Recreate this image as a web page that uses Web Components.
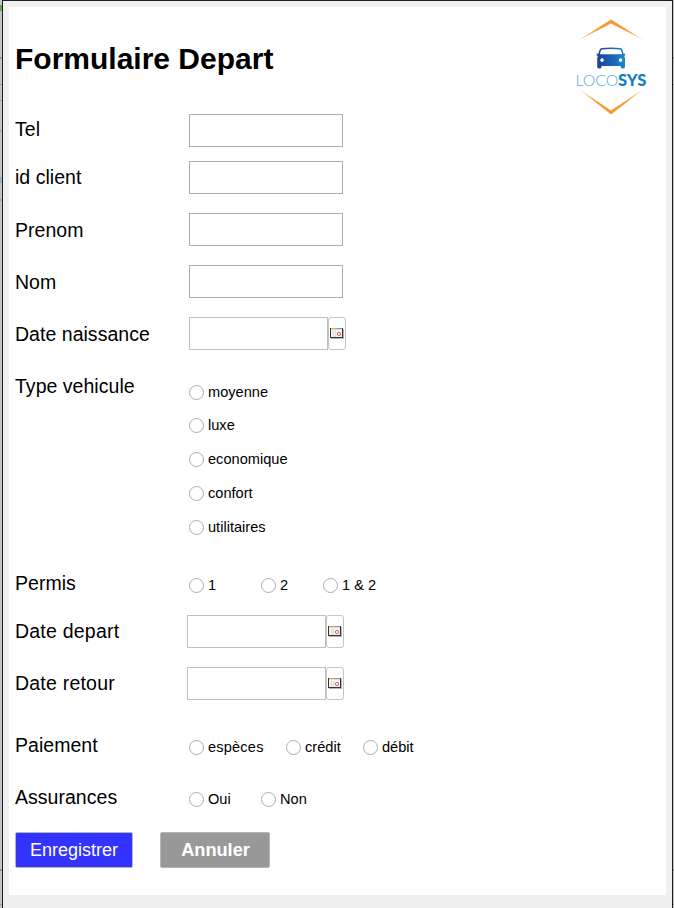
<!DOCTYPE html>
<html lang="fr">
<head>
<meta charset="utf-8">
<title>Formulaire Depart</title>
<style>
html,body{margin:0;height:100%}
body{background:#bdbdbd;font-family:"Liberation Sans",Arial,sans-serif;color:#000;overflow:hidden}
</style>
</head>
<body>
<rental-window>
  <form-header>Formulaire Depart</form-header>
  <form-row label="Tel" style="--h:47px;--shift:-1px"><text-box></text-box></form-row>
  <form-row label="id client" style="--h:52px;--shift:0px"><text-box></text-box></form-row>
  <form-row label="Prenom" style="--h:52px"><text-box></text-box></form-row>
  <form-row label="Nom" style="--h:52px"><text-box></text-box></form-row>
  <form-row label="Date naissance" style="--h:52px"><date-box></date-box></form-row>
  <form-row label="Type vehicule" style="--h:197px">
    <radio-group style="--dir:column;--top:6px">
      <radio-option style="--oh:33px">moyenne</radio-option>
      <radio-option>luxe</radio-option>
      <radio-option>economique</radio-option>
      <radio-option>confort</radio-option>
      <radio-option>utilitaires</radio-option>
    </radio-group>
  </form-row>
  <form-row label="Permis" style="--h:49px">
    <radio-group>
      <radio-option style="--w:72px">1</radio-option>
      <radio-option style="--w:62px">2</radio-option>
      <radio-option>1 &amp; 2</radio-option>
    </radio-group>
  </form-row>
  <form-row label="Date depart" style="--h:52px;--lead:172px;--shift:0px;--track:.22px"><date-box></date-box></form-row>
  <form-row label="Date retour" style="--h:61px;--lead:172px;--shift:0px;--track:.22px"><date-box></date-box></form-row>
  <form-row label="Paiement" style="--h:52px">
    <radio-group>
      <radio-option style="--w:97px;--ot:.18px">espèces</radio-option>
      <radio-option style="--w:77px">crédit</radio-option>
      <radio-option>débit</radio-option>
    </radio-group>
  </form-row>
  <form-row label="Assurances" style="--h:52px">
    <radio-group>
      <radio-option style="--w:72px">Oui</radio-option>
      <radio-option>Non</radio-option>
    </radio-group>
  </form-row>
  <form-actions>
    <action-button style="--w:118px;--bg:#3333ff">Enregistrer</action-button>
    <action-button style="--w:110px;--bg:#999;--weight:700;--size:18.2px;--indent:1px">Annuler</action-button>
  </form-actions>
</rental-window>
<script>
function define(name, html) {
  customElements.define(name, class extends HTMLElement {
    constructor() {
      super();
      this.attachShadow({mode: 'open'}).innerHTML = html;
    }
    connectedCallback() {
      const label = this.shadowRoot.querySelector('.label');
      if (label) label.textContent = this.getAttribute('label');
    }
  });
}

define('rental-window', `<style>
:host{display:block;box-sizing:border-box;height:908px;padding:0 1px 0 2px;
 background:linear-gradient(#9b9b9b,#9b9b9b) 0 57px/100% 2px no-repeat,
 linear-gradient(#9b9b9b,#9b9b9b) 0 84px/100% 1px no-repeat,
 linear-gradient(#e0982f,#e0982f) 0 100px/2px 1px no-repeat,
 linear-gradient(#d5a365,#d5a365) 0 130px/2px 2px no-repeat,
 linear-gradient(#8cb4cf,#8cb4cf) 0 177px/2px 6px no-repeat,
 linear-gradient(#d5a365,#d5a365) 0 199px/2px 2px no-repeat,
 linear-gradient(#69a34c,#69a34c) 0 5px/2px 6px no-repeat,
 linear-gradient(#979797,#979797) 0 869px/100% 2px no-repeat,
 linear-gradient(#979797,#979797) 0 904px/100% 1px no-repeat,#c4c4c4}
.frame{box-sizing:border-box;height:100%;border:solid #1d1d1f;border-width:1px 1px 0;background:#f0f0f0;padding:6px 6px 13px}
.sheet{box-sizing:border-box;height:100%;background:#fff;padding-left:6px}
</style><div class="frame"><div class="sheet"><slot></slot></div></div>`);

define('form-header', `<style>
:host{display:flex;justify-content:space-between;height:107px}
h1{margin:34px 0 0;font-size:30px;line-height:35px;font-weight:700}
</style><h1><slot></slot></h1><loco-logo></loco-logo>`);

define('loco-logo', `<style>:host{display:block;width:80px;height:100px;margin:8px 15px 0 0}svg{display:block}</style>
<svg width="80" height="100" viewBox="0 0 80 100">
<defs>
<linearGradient id="o" x1="0" x2="1" y1="0" y2="0"><stop offset="0" stop-color="#f8a13a" stop-opacity=".5"/><stop offset=".3" stop-color="#f79a2e"/><stop offset=".7" stop-color="#f79a2e"/><stop offset="1" stop-color="#f8a13a" stop-opacity=".5"/></linearGradient>
<linearGradient id="b" x1="0" x2="1" y1="0" y2="0"><stop offset="0" stop-color="#213c9b"/><stop offset="1" stop-color="#1689cd"/></linearGradient>
</defs>
<path fill="url(#o)" d="M7.5 25.3 40 4.5 73 25.3 40 8.4ZM7.5 73.8 40 95.4l33-21.6L40 99.4Z"/>
<path fill="url(#b)" fill-rule="evenodd" d="M31 33Q40 32.2 49 33 51 33.2 51.5 35L52.7 39l1.5-.5v2l-1.2.4Q54 42 54 44v7.8q0 1.7-1.5 1.7H51q-1.2 0-1.2-1.7V51H30.5v.8q0 1.7-1.2 1.7h-1.6q-1.5 0-1.5-1.7V44q0-2 .8-3.1l-1.3-.4v-2l1.5.5 1.3-4Q29.2 33.2 31 33ZM31.5 34.4q-1.2.1-1.6 1.2L28.9 39.2h22.4L50 35.6q-.4-1.1-1.6-1.2-8.4-.7-16.9 0ZM31 43.3a1.8 1.8 0 1 0 .1 0ZM49.5 43.3a1.8 1.8 0 1 0 .1 0Z"/>
<text x="4.4" y="70.8" font-family="Lato,sans-serif" font-weight="300" font-size="16" textLength="43" lengthAdjust="spacingAndGlyphs" fill="#60a9dc">LOCO</text>
<text x="47" y="70.8" font-family="Lato,sans-serif" font-weight="900" font-size="16" textLength="28.3" lengthAdjust="spacingAndGlyphs" fill="#167dc4">SYS</text>
</svg>`);

define('form-row', `<style>
:host{display:flex;height:var(--h)}
.label{width:var(--lead,174px);flex:none;font-size:19.5px;line-height:33px;white-space:nowrap;margin-top:var(--shift,1px);letter-spacing:var(--track,.03px)}
</style><span class="label"></span><slot></slot>`);

define('text-box', `<style>
:host{display:block}
input{display:block;box-sizing:border-box;width:154px;height:33px;border:1px solid #adadad;border-radius:0;padding:0 4px;background:#fff;outline:0;font:15px "Liberation Sans",sans-serif}
</style><input type="text">`);

define('date-box', `<style>
:host{display:flex;height:33px}
input{box-sizing:border-box;width:139px;height:33px;border:1px solid #c0c0c0;padding:0 4px;outline:0}
button{box-sizing:border-box;width:18px;height:33px;border:1px solid #c4c4c4;border-radius:3px;background:#fff;padding:0;display:flex;align-items:center;justify-content:center}
svg{display:block;flex:none}
</style><input type="text"><button type="button" aria-label="Calendrier"><svg width="14" height="11" viewBox="0 0 14 11" shape-rendering="crispEdges">
<path fill="#b5b5b5" d="M1 10h13v1H1ZM13 1h1v10h-1Z"/><path fill="#333" d="M0 0h13v10H0Z"/><path fill="#f3f3f3" d="M1 2h11v7H1Z"/><path fill="#e5ac3c" d="M1 0h5v1H1Z"/><path fill="#7899d2" d="M6 0h6v1H6Z"/><path fill="#ddd" d="M1 1h11v1H1ZM3 3h1v6H3ZM5 3h1v6H5Z"/><circle cx="9" cy="6" r="1.6" fill="#fff" stroke="#ed5555" shape-rendering="auto"/></svg></button>`);

define('radio-group', `<style>
:host{display:flex;flex-direction:var(--dir,row);padding-top:var(--top,2px)}
</style><slot></slot>`);

define('radio-option', `<style>
:host{display:block;width:var(--w,auto);height:var(--oh,34px)}
label{display:flex;align-items:center;height:33px;font-size:14.6px;letter-spacing:var(--ot,0);white-space:nowrap}
input{appearance:none;box-sizing:border-box;width:15px;height:15px;margin:2px 4px 0 0;border:1px solid #adadad;border-radius:50%;background:#fff;flex:none}
</style><label><input type="radio"><span><slot></slot></span></label>`);

define('form-actions', `<style>:host{display:flex;gap:27px}</style><slot></slot>`);

define('action-button', `<style>
:host{display:block}
button{display:block;box-sizing:border-box;width:var(--w);height:36px;border:1px solid #b5b5b5;border-radius:2px;background:var(--bg);color:#fff;padding:0 0 0 var(--indent,0);font:var(--weight,400) var(--size,18px) "Liberation Sans",Arial,sans-serif}
</style><button type="button"><slot></slot></button>`);
</script>
</body>
</html>
